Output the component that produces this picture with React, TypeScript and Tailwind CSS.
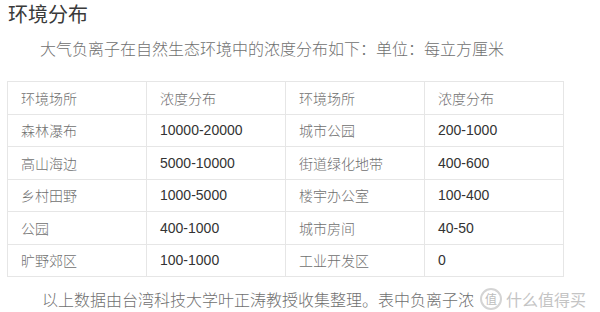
const rows: [string, string, string, string][] = [
  ['森林瀑布', '10000-20000', '城市公园', '200-1000'],
  ['高山海边', '5000-10000', '街道绿化地带', '400-600'],
  ['乡村田野', '1000-5000', '楼宇办公室', '100-400'],
  ['公园', '400-1000', '城市房间', '40-50'],
  ['旷野郊区', '100-1000', '工业开发区', '0'],
];

const cjk = "font-['Noto_Sans_CJK_SC',sans-serif]";
const num = "font-['Liberation_Sans','Noto_Sans_CJK_SC',sans-serif]";

function Cell({ text, kind }: { text: string; kind: 'cjk' | 'num' }) {
  return (
    <td
      className={`h-[32.5px] w-[139px] border border-[#e6e6e6] px-[13px] py-0 text-[14px] leading-[20px] ${
        kind === 'cjk' ? `${cjk} font-light text-[#707070]` : `${num} text-[#333]`
      }`}
    >
      {text}
    </td>
  );
}

export default function App() {
  return (
    <div className="h-[312px] w-[600px] overflow-hidden bg-white">
      <h2 className={`${cjk} pl-[8px] pt-[1px] text-[20px] leading-[26px] font-normal text-[#3a3a3a]`}>环境分布</h2>
      <p className={`${cjk} mt-[9px] pl-[40px] text-[16px] leading-[24px] font-light text-[#707070]`}>
        大气负离子在自然生态环境中的浓度分布如下：单位：每立方厘米
      </p>
      <table className="ml-[7px] mt-[21px] w-[555px] table-fixed border-collapse">
        <tbody>
          <tr>
            <Cell text="环境场所" kind="cjk" />
            <Cell text="浓度分布" kind="cjk" />
            <Cell text="环境场所" kind="cjk" />
            <Cell text="浓度分布" kind="cjk" />
          </tr>
          {rows.map(r => (
            <tr key={r[0]}>
              <Cell text={r[0]} kind="cjk" />
              <Cell text={r[1]} kind="num" />
              <Cell text={r[2]} kind="cjk" />
              <Cell text={r[3]} kind="num" />
            </tr>
          ))}
        </tbody>
      </table>
      <div className="mt-[10px] flex h-[24px] items-center pl-[42px]">
        <p className={`${cjk} whitespace-nowrap text-[16px] leading-[24px] font-light text-[#707070]`}>
          以上数据由台湾科技大学叶正涛教授收集整理。表中负离子浓
        </p>
        {/* watermark */}
        <div className="ml-[6px] flex items-center gap-[4px]">
          <div className="flex h-[22px] w-[22px] items-center justify-center rounded-full border-2 border-[#d4d4d4]">
            <span className={`${cjk} text-[12px] leading-none text-[#bdbdbd]`}>值</span>
          </div>
          <span className={`${cjk} whitespace-nowrap text-[16px] leading-none text-[#c4c4c4]`}>什么值得买</span>
        </div>
      </div>
    </div>
  );
}
